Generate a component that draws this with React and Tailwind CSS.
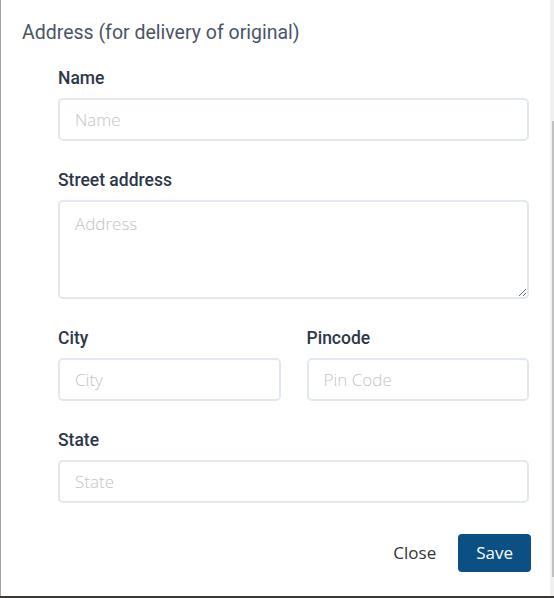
import React, { useState } from "react";

const Field = ({ label, placeholder, className = "" }) => (
    <div className={className}>
        <label className="block mb-2 text-[17.5px] leading-6 font-medium text-[#2d3748]">{label}</label>
        <input
            type="text"
            placeholder={placeholder}
            className="w-full h-[43px] px-[15px] rounded-[5px] border-2 border-[#e2e8f0] bg-white text-[17px] font-light text-[#333] placeholder:text-[#c4c4c4] outline-none"
            style={{ fontFamily: "'Open Sans', sans-serif" }}
        />
    </div>
);

const AddressModal = () => {
    const [street, setStreet] = useState("");

    return (
        <div className="w-[554px] h-[598px] flex flex-col bg-white" style={{ fontFamily: "Roboto, 'Liberation Sans', sans-serif" }}>
            <div className="flex flex-1 min-h-0">
                <div className="w-px bg-[#a3a3a3]" />
                <div className="flex-1 flex flex-col pt-[21px]">
                    <h3 className="pl-[21px] text-[19.5px] leading-6 text-[#4a5568]">Address (for delivery of original)</h3>
                    <form className="mt-[21px] pl-[57px] pr-[21px] flex flex-col gap-[27px]">
                        <Field label="Name" placeholder="Name" />
                        <div>
                            <label className="block mb-2 text-[17.5px] leading-6 font-medium text-[#2d3748]">Street address</label>
                            <textarea
                                placeholder="Address"
                                value={street}
                                onChange={(e) => setStreet(e.target.value)}
                                className="block w-full h-[99px] px-[15px] py-[9px] rounded-[5px] border-2 border-[#e2e8f0] text-[17px] font-light placeholder:text-[#c4c4c4] outline-none"
                                style={{ fontFamily: "'Open Sans', sans-serif" }}
                            />
                        </div>
                        <div className="grid grid-cols-2 gap-[26px]">
                            <Field label="City" placeholder="City" />
                            <Field label="Pincode" placeholder="Pin Code" />
                        </div>
                        <Field label="State" placeholder="State" />
                    </form>
                    <div className="mt-[31px] pr-[19px] flex justify-end items-center gap-[22px]" style={{ fontFamily: "'Open Sans', sans-serif" }}>
                        <button className="text-[17px] text-[#333]">Close</button>
                        <button className="h-[38px] px-[18px] rounded-[4px] bg-[#0b4f84] text-white text-[17px]">Save</button>
                    </div>
                </div>
                <div className="w-[4px] bg-[#f0f0f0] flex justify-end pt-[121px] pb-[19px]">
                    <div className="w-[2px] h-full bg-[#c1c1c1]" />
                </div>
            </div>
            <div className="h-[2px] bg-[#3a3836]" />
        </div>
    );
};

export default AddressModal;
